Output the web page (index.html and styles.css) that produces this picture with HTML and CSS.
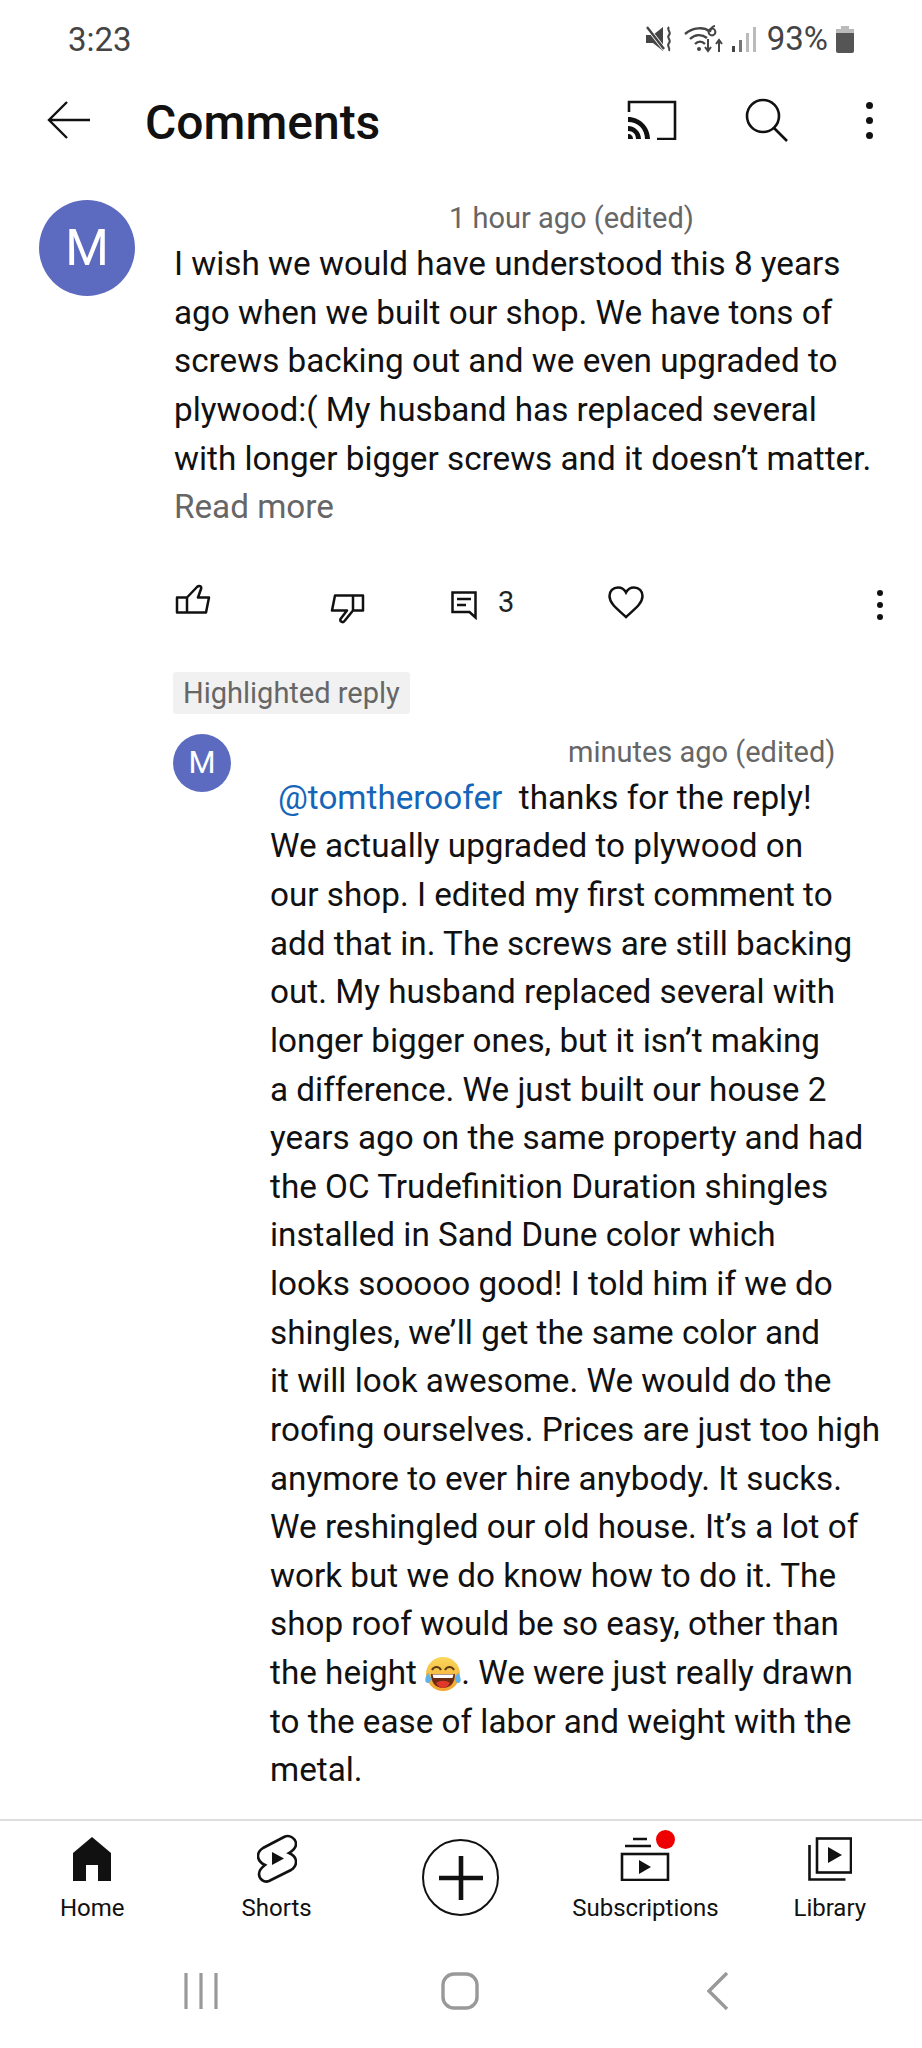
FILE: index.html
```html
<!DOCTYPE html>
<html lang="en">
<head>
    <meta charset="UTF-8">
    <meta name="viewport" content="width=device-width, initial-scale=1">
    <title>Comments</title>
    <link rel="stylesheet" href="styles.css">
</head>
<body>

    <div class="statusbar">
        <span class="klokke">3:23</span>
        <div class="status-ikoner">
            <svg class="ikon-mute" width="26" height="26" viewBox="0 0 26 26">
                <path d="M0 9h7l10-8v24L7 17H0z" fill="#444"/>
                <path d="M1 1l17 22" stroke="#fff" stroke-width="4"/>
                <path d="M1 1l17 22" stroke="#444" stroke-width="2.400"/>
                <path d="M23 1c-3 3 3 5 0 8s3 5 0 8 2 5 0 8" stroke="#444" stroke-width="2" fill="none"/>
            </svg>
            <svg width="40" height="28" viewBox="0 0 40 28">
                <path d="M1 9C9 2 20 2 25 6M6 14c5-5 12-5 17-1M11 19c3-3 7-3 10 0" stroke="#444" stroke-width="2.400" fill="none"/>
                <circle cx="15" cy="24" r="2" fill="#444"/>
                <circle cx="28" cy="7" r="3.400" stroke="#444" stroke-width="2" fill="none"/>
                <path d="M31 1c-3 0-4 2-5 6" stroke="#444" stroke-width="2" fill="none"/>
                <path d="M24 14v12m-3-4l3 4 3-4M35 27V15m-3 4l3-4 3 4" stroke="#444" stroke-width="2" fill="none"/>
            </svg>
            <svg width="24" height="26" viewBox="0 0 24 26">
                <rect x="0" y="20" width="3" height="6" fill="#444"/>
                <rect x="7" y="14" width="3" height="12" fill="#777"/>
                <rect x="14" y="7" width="3" height="19" fill="#bbb"/>
                <rect x="21" y="1" width="3" height="25" fill="#bbb"/>
            </svg>
            <span class="prosent">93%</span>
            <svg width="18" height="27" viewBox="0 0 18 27">
                <path d="M5 0h8v3H5z" fill="#bbb"/>
                <rect y="3" width="18" height="24" rx="2" fill="#555"/>
                <path d="M2 3h14a2 2 0 0 1 2 2v2H0V5a2 2 0 0 1 2-2z" fill="#bbb"/>
            </svg>
        </div>
    </div>

    <header class="topplinje">
        <svg class="tilbake" width="44" height="38" viewBox="0 0 44 38">
            <path d="M43 19H2M20 1L2 19l18 18" stroke="#111" stroke-width="2.400" fill="none"/>
        </svg>
        <h1 class="overskrift">Comments</h1>
        <svg class="cast" width="50" height="40" viewBox="0 0 50 40">
            <path d="M2 12V2h46v37H30" stroke="#111" stroke-width="2.600" fill="none"/>
            <path d="M1 17c12 0 22 10 22 22h-5C18 29 11 22 1 22zM1 26c7 0 13 6 13 13H9c0-5-3-8-8-8zM1 34c3 0 5 2 5 5H1z" fill="#111"/>
        </svg>
        <svg class="sok" width="44" height="44" viewBox="0 0 44 44">
            <circle cx="18" cy="18" r="16" stroke="#111" stroke-width="2.600" fill="none"/>
            <path d="M29 30l13 13" stroke="#111" stroke-width="2.600"/>
        </svg>
        <div class="prikker store"><i></i><i></i><i></i></div>
    </header>

    <main class="innhold">

        <div class="kommentar">
            <div class="avatar stor">M</div>
            <div class="tekstkolonne">
                <p class="tid tid-forste">1 hour ago (edited)</p>
                <p class="brodtekst">I wish we would have understood this 8 years<br>
                ago when we built our shop. We have tons of<br>
                screws backing out and we even upgraded to<br>
                plywood:( My husband has replaced several<br>
                with longer bigger screws and it doesn’t matter.<br>
                <span class="les-mer">Read more</span></p>
            </div>
        </div>

        <div class="handlinger">
            <svg class="tommel-opp" width="36" height="30" viewBox="0 0 36 30">
                <path d="M2 13.500h10v15H2zM12 13.500L22 3c2-2 5-1 4 2l-3 8.500h11l-3 15H12" stroke="#111" stroke-width="2.500" fill="none" stroke-linejoin="round"/>
            </svg>
            <svg class="tommel-ned" width="36" height="30" viewBox="0 0 36 30">
                <path d="M23 1.500h10v15H23zM23 1.500H5l-3 15h15L10.500 25c-1 3 3 4 4 2l8.500-10.500" stroke="#111" stroke-width="2.500" fill="none" stroke-linejoin="round"/>
            </svg>
            <svg class="svar-ikon" width="26" height="29" viewBox="0 0 26 29">
                <path d="M1.500 1.500h23v25l-6-5.500h-17z" stroke="#111" stroke-width="2.500" fill="none"/>
                <path d="M6 8h14M6 14h9" stroke="#111" stroke-width="2.400"/>
            </svg>
            <span class="antall">3</span>
            <svg class="hjerte" width="36" height="33" viewBox="0 0 36 33">
                <path d="M18 31C8 22 1.500 17 1.500 10 1.500 5 5 1.500 10 1.500c3.500 0 6.500 2 8 5 1.500-3 4.500-5 8-5 5 0 8.500 3.500 8.500 8.500 0 7-6.500 12-16.500 21z" stroke="#111" stroke-width="2.500" fill="none"/>
            </svg>
            <div class="prikker"><i></i><i></i><i></i></div>
        </div>

        <div class="fremhevet"><span>Highlighted reply</span></div>

        <div class="kommentar svar">
            <div class="avatar liten">M</div>
            <div class="tekstkolonne">
                <p class="tid tid-svar">minutes ago (edited)</p>
                <p class="brodtekst"><a class="omtale">@tomtheroofer</a> &nbsp;thanks for the reply!<br>
                We actually upgraded to plywood on<br>
                our shop. I edited my first comment to<br>
                add that in. The screws are still backing<br>
                out. My husband replaced several with<br>
                longer bigger ones, but it isn’t making<br>
                a difference. We just built our house 2<br>
                years ago on the same property and had<br>
                the OC Trudefinition Duration shingles<br>
                installed in Sand Dune color which<br>
                looks sooooo good! I told him if we do<br>
                shingles, we’ll get the same color and<br>
                it will look awesome. We would do the<br>
                roofing ourselves. Prices are just too high<br>
                anymore to ever hire anybody. It sucks.<br>
                We reshingled our old house. It’s a lot of<br>
                work but we do know how to do it. The<br>
                shop roof would be so easy, other than<br>
                the height <svg class="emoji" width="36" height="36" viewBox="0 0 36 36">
                    <defs>
                        <linearGradient id="ansikt" x1="0" y1="0" x2="0" y2="1">
                            <stop offset="0" stop-color="#fbd75b"/>
                            <stop offset="1" stop-color="#f2a32c"/>
                        </linearGradient>
                    </defs>
                    <circle cx="18" cy="18" r="17" fill="url(#ansikt)"/>
                    <path d="M7 14c2-4 7-4 9 0M20 14c2-4 7-4 9 0" stroke="#5a3a14" stroke-width="2" fill="none"/>
                    <path d="M6 18h24c0 9-5 14-12 14S6 27 6 18z" fill="#6b2a12"/>
                    <path d="M11 27c4-3 10-3 14 0-2 3-4 5-7 5s-5-2-7-5z" fill="#e0392b"/>
                    <path d="M7.500 18.500h21l-1 3.500h-19z" fill="#fff"/>
                    <path d="M3 17c-3 4-3.500 8-1.500 9.500S6 26 6 23c0-2-1.500-4-3-6zM33 17c3 4 3.500 8 1.500 9.500S30 26 30 23c0-2 1.500-4 3-6z" fill="#5fb2ea"/>
                </svg>. We were just really drawn<br>
                to the ease of labor and weight with the<br>
                metal.</p>
            </div>
        </div>

    </main>

    <nav class="bunnmeny">
        <div class="meny-punkt">
            <svg width="40" height="44" viewBox="0 0 40 44">
                <path d="M20 0L39 16v28H26V28H14v16H1V16z" fill="#111"/>
            </svg>
            <span>Home</span>
        </div>
        <div class="meny-punkt">
            <svg class="shorts" width="40" height="50" viewBox="0 0 40 50">
                <path d="M6 14L27 3c6-3 12 2 12 7 0 4-2 6-7 9 5 2 7 5 7 9 0 4-2 6-5 8L12 47c-5 2-10-2-10-7 0-4 2-6 6-9-4-2-7-5-7-9 0-4 2-6 5-8z" stroke="#111" stroke-width="2.600" fill="none"/>
                <path d="M15 18l12 6.500L15 31z" fill="#111"/>
            </svg>
            <span>Shorts</span>
        </div>
        <div class="meny-punkt">
            <div class="pluss">
                <svg width="44" height="44" viewBox="0 0 44 44">
                    <path d="M22 0v44M0 22h44" stroke="#111" stroke-width="4.600"/>
                </svg>
            </div>
        </div>
        <div class="meny-punkt">
            <div class="abonnement">
                <svg width="50" height="44" viewBox="0 0 50 44">
                    <path d="M13 2h14M5 9h26" stroke="#111" stroke-width="2.600"/>
                    <rect x="2" y="17" width="46" height="26" stroke="#111" stroke-width="2.600" fill="none"/>
                    <path d="M19 23l12 7-12 7z" fill="#111"/>
                </svg>
                <b class="varsel"></b>
            </div>
            <span>Subscriptions</span>
        </div>
        <div class="meny-punkt">
            <svg width="44" height="44" viewBox="0 0 44 44">
                <rect x="9" y="1.500" width="34" height="34" stroke="#111" stroke-width="2.600" fill="none"/>
                <path d="M1.500 8v34.500h36" stroke="#111" stroke-width="2.600" fill="none"/>
                <path d="M20 10l14 8-14 8z" fill="#111"/>
            </svg>
            <span>Library</span>
        </div>
    </nav>

    <div class="navigasjon">
        <svg width="34" height="38" viewBox="0 0 34 38">
            <path d="M2 1v36M17 1v36M32 1v36" stroke="#999" stroke-width="3.200"/>
        </svg>
        <svg class="hjem-knapp" width="38" height="38" viewBox="0 0 38 38">
            <rect x="2" y="2" width="34" height="34" rx="11" stroke="#999" stroke-width="3.400" fill="none"/>
        </svg>
        <svg width="22" height="38" viewBox="0 0 22 38">
            <path d="M20 1L2 19l18 18" stroke="#999" stroke-width="3.400" fill="none"/>
        </svg>
    </div>

</body>
</html>
```

FILE: styles.css
```css
* {
    box-sizing: border-box;
    margin: 0;
    font-family: Roboto, 'Liberation Sans', sans-serif;
}
body {
    width: 922px;
    height: 2048px;
    background-color: white;
    color: #111;
    display: flex;
    flex-direction: column;
    overflow: hidden;
}
svg {
    display: block;
}

/* Statusbar */
.statusbar {
    height: 78px;
    padding: 23px 68px 0 68px;
    display: flex;
    justify-content: space-between;
    align-items: flex-start;
    color: #444;
    font-size: 33px;
    line-height: 34px;
}
.status-ikoner {
    display: flex;
    align-items: center;
    gap: 8px;
    margin-top: -1px;
}
.ikon-mute {
    margin-right: 4px;
}
.prosent {
    font-size: 33px;
    margin-left: 3px;
}

/* Topplinje */
.topplinje {
    height: 84px;
    padding: 0 49px 0 47px;
    display: flex;
    align-items: center;
}
.overskrift {
    font-size: 48px;
    font-weight: 500;
    margin-left: 54px;
    margin-top: 4px;
    flex: 1;
}
.cast {
    margin-right: 68px;
}
.sok {
    margin-right: 77px;
}
.prikker {
    display: flex;
    flex-direction: column;
    gap: 6px;
}
.prikker i {
    display: block;
    width: 6px;
    height: 6px;
    border-radius: 50%;
    background-color: #111;
}
.store {
    gap: 8px;
}
.store i {
    width: 7px;
    height: 7px;
}

/* Kommentarer */
.innhold {
    flex: 1;
}
.kommentar {
    display: flex;
    padding-left: 39px;
    padding-top: 38px;
}
.avatar {
    flex: none;
    border-radius: 50%;
    background-color: #5c6bc0;
    color: white;
    display: flex;
    align-items: center;
    justify-content: center;
}
.stor {
    width: 96px;
    height: 96px;
    font-size: 50px;
    margin-right: 39px;
}
.liten {
    width: 58px;
    height: 58px;
    font-size: 31px;
    margin-right: 39px;
}
.tid {
    color: #666;
    font-size: 29px;
    line-height: 36px;
    margin-bottom: 4px;
}
.tid-forste {
    padding-left: 275px;
}
.tid-svar {
    padding-left: 298px;
}
.brodtekst {
    font-size: 33.250px;
    line-height: 48.620px;
    white-space: nowrap;
    color: #111;
}
.les-mer {
    color: #666;
}
.omtale {
    color: #1565b8;
    margin-left: 8px;
}
.emoji {
    display: inline-block;
    vertical-align: -8px;
}

/* Handlinger */
.handlinger {
    display: flex;
    align-items: flex-start;
    padding: 0 39px 0 175px;
    height: 88px;
    margin-top: 52px;
}
.tommel-opp {
    margin-right: 119px;
}
.tommel-ned {
    margin-top: 10px;
    margin-right: 85px;
}
.svar-ikon {
    margin-top: 7px;
    margin-right: 21px;
}
.antall {
    font-size: 29px;
    line-height: 34px;
    margin-top: 1px;
    margin-right: 94px;
    color: #222;
}
.hjerte {
    margin-top: 2px;
}
.handlinger .prikker {
    margin-left: auto;
    margin-top: 6px;
}

.fremhevet {
    padding-left: 173px;
}
.fremhevet span {
    display: inline-block;
    background-color: #f1f1f1;
    color: #666;
    font-size: 29px;
    line-height: 42px;
    padding: 0 10px;
    border-radius: 3px;
}
.svar {
    padding-left: 173px;
    padding-top: 20px;
}

/* Bunnmeny */
.bunnmeny {
    height: 135px;
    border-top: 2px solid #ddd;
    display: grid;
    grid-template-columns: repeat(5, 1fr);
    padding-top: 16px;
}
.meny-punkt {
    display: flex;
    flex-direction: column;
    align-items: center;
    justify-content: flex-start;
    height: 88px;
    gap: 12px;
    font-size: 24px;
    line-height: 30px;
    color: #111;
}
.shorts {
    margin: -3px 0;
}
.pluss {
    width: 77px;
    height: 77px;
    margin-top: 2px;
    border: 2.600px solid #111;
    border-radius: 50%;
    display: flex;
    align-items: center;
    justify-content: center;
}
.abonnement {
    position: relative;
}
.varsel {
    position: absolute;
    top: -7px;
    right: -5px;
    width: 19px;
    height: 19px;
    border-radius: 50%;
    background-color: #ee0000;
}

/* Navigasjon */
.navigasjon {
    height: 94px;
    padding: 18px 193px 0 184px;
    display: flex;
    justify-content: space-between;
    align-items: flex-start;
}
.hjem-knapp {
    margin-right: 5px;
}
```
